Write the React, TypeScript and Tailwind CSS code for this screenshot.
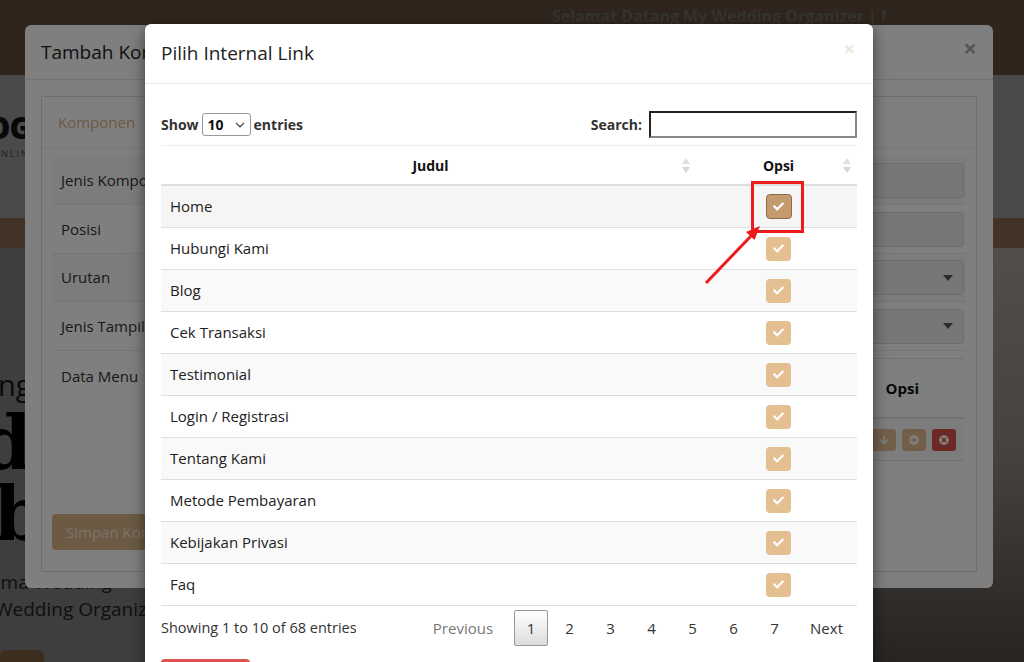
import React from "react";
import { FaCheck, FaArrowDown, FaPlusCircle, FaTimesCircle } from "react-icons/fa";

const rows = [
  "Home",
  "Hubungi Kami",
  "Blog",
  "Cek Transaksi",
  "Testimonial",
  "Login / Registrasi",
  "Tentang Kami",
  "Metode Pembayaran",
  "Kebijakan Privasi",
  "Faq",
];

function SortIcon() {
  return (
    <svg width="8" height="15" viewBox="0 0 8 15">
      <path d="M4 0 L8 6 H0 Z" fill="#e0e0e0" />
      <path d="M4 15 L8 9 H0 Z" fill="#d6d6d6" />
    </svg>
  );
}

function Caret() {
  return (
    <svg width="10" height="6" viewBox="0 0 10 6">
      <path d="M0 0 H10 L5 6 Z" fill="#555" />
    </svg>
  );
}

export default function App() {
  return (
    <div className="relative w-[1024px] h-[662px] overflow-hidden font-['Open_Sans',sans-serif] bg-[#808080]">
      {/* background page (already under first overlay) */}
      <div className="flex flex-col h-full overflow-hidden">
        <div className="h-[75px] shrink-0 bg-[#5e4a38] pl-[552px] pt-[4px]">
          <div className="w-[334px] overflow-hidden whitespace-nowrap">
            <span className="text-[16px] font-bold text-[#6a6661]">Selamat Datang My Wedding Organizer | Menyediakan</span>
          </div>
        </div>
        <div className="h-[143px] shrink-0 bg-[#959595] flex flex-col pt-[38px]">
          <div className="-ml-[44px] text-[30px] leading-[30px] font-extrabold text-[#111] tracking-tight">WOG</div>
          <div className="-ml-[8px] mt-[4px] text-[9px] text-[#444] tracking-[2px]">ONLINE WEDDING</div>
        </div>
        <div className="h-[30px] shrink-0 bg-[#86674c]" />
        <div className="flex-1 min-h-0 flex bg-[#7c7c7c]">
          <div className="flex flex-col pt-[121px] w-[600px]">
            <div className="-ml-[2px] text-[29px] leading-[32px] text-[#111]">ng Organizer</div>
            <div className="-ml-[20px] mt-[6px] font-['DejaVu_Serif',serif] font-bold text-[74px] leading-[72px] text-[#000]">dl</div>
            <div className="-ml-[6px] font-['DejaVu_Serif',serif] font-bold text-[74px] leading-[70px] text-[#000]">b</div>
            <div className="-ml-[10px] mt-[20px] text-[19px] leading-[27px] text-[#1e1e1e]">ama Wedding</div>
            <div className="-ml-[5px] text-[19px] leading-[27px] text-[#1e1e1e]">Wedding Organizer Terbaik</div>
            <div className="mt-[27px] shrink-0 w-[44px] h-[30px] rounded-[6px] bg-[#7a5a3e]" />
          </div>
          <div className="flex-1 bg-gradient-to-b from-[#a39c95] via-[#8c857e] to-[#4e4842]" />
        </div>
      </div>

      {/* first modal */}
      <div className="absolute left-[25px] top-[25px] w-[968px] h-[563px] bg-white rounded-[6px] flex flex-col">
        <div className="h-[60px] border-b border-[#e5e5e5] px-4 flex items-center justify-between">
          <span className="text-[19px] text-[#222]">Tambah Komponen</span>
          <span className="text-[24px] font-bold text-[#aaa] leading-none -mt-[8px]">×</span>
        </div>
        <div className="p-4">
          <div className="border border-[#ddd] h-[476px] flex flex-col">
            <div className="h-[51px] pl-[16px] flex items-center border-b border-[#eee]">
              <span className="text-[15px] text-[#d9b286]">Komponen</span>
            </div>
            <div className="px-[10px] pt-[9px] flex flex-col">
              {[
                { l: "Jenis Komponen", t: "input", h: 48 },
                { l: "Posisi", t: "input", h: 49 },
                { l: "Urutan", t: "select", h: 48 },
                { l: "Jenis Tampilan", t: "select", h: 49 },
              ].map((r, i) => (
                <div
                  key={r.l}
                  className={`flex items-center border-b border-[#ececec] ${i % 2 === 0 ? "bg-[#f9f9f9]" : "bg-white"}`}
                  style={{ height: r.h }}
                >
                  <div className="w-[220px] pl-[9px] text-[15px] text-[#333]">{r.l}</div>
                  <div className="flex-1 h-[35px] mr-[2px] rounded-[4px] border border-[#d8d8d8] bg-[#eeeeee] flex items-center justify-end pr-[10px]">
                    {r.t === "select" && <Caret />}
                  </div>
                </div>
              ))}
              <div className="flex pt-[14px]">
                <div className="w-[220px] pl-[9px] text-[15px] text-[#333]">Data Menu</div>
                <div className="flex-1 flex flex-col -mt-[7px] mr-[2px]">
                  <div className="h-[61px] border-t border-b-2 border-[#e5e5e5] flex items-center justify-end pr-[45px]">
                    <span className="text-[15px] font-bold text-[#111]">Opsi</span>
                  </div>
                  <div className="h-[42px] border-b border-[#e5e5e5] bg-[#fafafa] flex items-center justify-end gap-[6px] pr-[8px]">
                    <div className="w-[24px] h-[22px] rounded-[3px] bg-[#e3bf92] flex items-center justify-center">
                      <FaArrowDown className="text-white text-[10px]" />
                    </div>
                    <div className="w-[24px] h-[22px] rounded-[3px] bg-[#e3bf92] flex items-center justify-center">
                      <FaPlusCircle className="text-white text-[10px]" />
                    </div>
                    <div className="w-[24px] h-[22px] rounded-[3px] bg-[#d9534f] flex items-center justify-center">
                      <FaTimesCircle className="text-white text-[10px]" />
                    </div>
                  </div>
                </div>
              </div>
              <div className="mt-[53px] w-[160px] h-[36px] rounded-[4px] bg-[#d9b589] flex items-center pl-[14px]">
                <span className="text-[15px] text-[#f3e6d6]">Simpan Komponen</span>
              </div>
            </div>
          </div>
        </div>
      </div>

      {/* second overlay */}
      <div className="absolute inset-0 bg-black/50" />

      {/* second modal */}
      <div className="absolute left-[145px] top-[24px] w-[728px] h-[700px] bg-white rounded-t-[6px] shadow-[0_5px_15px_rgba(0,0,0,0.5)] flex flex-col">
        <div className="h-[60px] border-b border-[#e5e5e5] px-4 flex items-center justify-between">
          <span className="text-[19px] text-[#222]">Pilih Internal Link</span>
          <span className="text-[20px] font-bold text-[#f1e6d8] leading-none -mt-[10px] mr-[2px]">×</span>
        </div>
        <div className="px-4 pt-[27px] flex flex-col">
          <div className="h-[27px] flex items-center justify-between">
            <div className="flex items-center gap-[3px] text-[14px] font-bold text-[#333]">
              <span>Show</span>
              <div className="w-[49px] h-[23px] border border-[#999] rounded-[3px] flex items-center justify-between px-[5px]">
                <span className="text-[14px] font-bold text-[#111]">10</span>
                <svg width="10" height="6" viewBox="0 0 10 6">
                  <path d="M1 1 L5 5 L9 1" stroke="#444" strokeWidth="1.2" fill="none" />
                </svg>
              </div>
              <span>entries</span>
            </div>
            <div className="flex items-center gap-[7px]">
              <span className="text-[14px] font-bold text-[#333]">Search:</span>
              <div className="w-[208px] h-[27px] border-2 border-t-[#222] border-l-[#222] border-b-[#888] border-r-[#888] bg-white" />
            </div>
          </div>

          <div className="mt-[7px] border-t border-[#eee]">
            <div className="h-[40px] flex border-b-2 border-[#dddddd]">
              <div className="w-[539px] relative flex items-center justify-center">
                <span className="text-[14px] font-bold text-[#111]">Judul</span>
                <div className="absolute right-[10px] top-[12px]">
                  <SortIcon />
                </div>
              </div>
              <div className="flex-1 relative flex items-center justify-center">
                <span className="text-[14px] font-bold text-[#111]">Opsi</span>
                <div className="absolute right-[6px] top-[12px]">
                  <SortIcon />
                </div>
              </div>
            </div>
            {rows.map((r, i) => (
              <div
                key={r}
                className={`h-[42px] flex items-center border-b border-[#dedede] ${
                  i === 0 ? "bg-[#f5f5f5]" : i % 2 === 0 ? "bg-[#f9f9f9]" : "bg-white"
                }`}
              >
                <div className="w-[539px] pl-[9px] text-[15px] text-[#222]">{r}</div>
                <div className="flex-1 flex justify-center">
                  {i === 0 ? (
                    <div className="w-[26px] h-[25px] rounded-[4px] bg-[#c49b6e] border border-[#8d6b48] flex items-center justify-center">
                      <FaCheck className="text-white text-[11px]" />
                    </div>
                  ) : (
                    <div className="w-[25px] h-[24px] rounded-[4px] bg-[#e3bf92] flex items-center justify-center">
                      <FaCheck className="text-white text-[11px]" />
                    </div>
                  )}
                </div>
              </div>
            ))}
          </div>

          <div className="h-[42px] flex items-center justify-between pt-[2px]">
            <span className="text-[14.5px] text-[#333]">Showing 1 to 10 of 68 entries</span>
            <div className="flex items-center text-[15px] text-[#333]">
              <span className="px-[13px] text-[#777]">Previous</span>
              <div className="ml-[8px] w-[34px] h-[36px] border border-[#979797] rounded-[2px] bg-gradient-to-b from-white to-[#dcdcdc] flex items-center justify-center text-[#333]">
                1
              </div>
              {["2", "3", "4", "5", "6", "7"].map((p) => (
                <span key={p} className="ml-[2px] w-[39px] text-center">
                  {p}
                </span>
              ))}
              <span className="ml-[2px] pl-[14px] pr-[14px]">Next</span>
            </div>
          </div>

          <div className="mt-[11px] w-[89px] h-[36px] rounded-[4px] bg-[#d9534f]" />
        </div>
      </div>

      {/* annotation */}
      <div className="absolute left-[751px] top-[181px] w-[53px] h-[52px] border-[3px] border-[#ec1c1c]" />
      <svg className="absolute left-0 top-0 pointer-events-none" width="1024" height="662">
        <line x1="706" y1="283" x2="751" y2="236" stroke="#ec1c1c" strokeWidth="3" />
        <polygon points="760,226 754.5,240 746,232" fill="#ec1c1c" />
      </svg>
    </div>
  );
}
